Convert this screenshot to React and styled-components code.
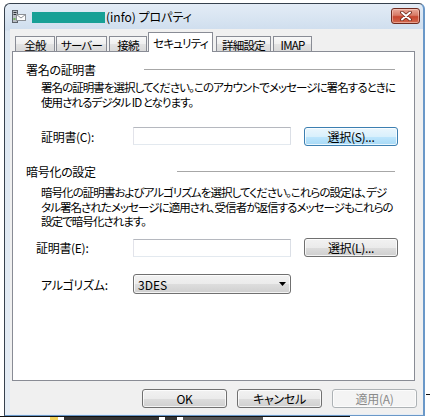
import React from 'react'
import styled, { createGlobalStyle } from 'styled-components'

const GlobalStyle = createGlobalStyle`
html, body {
  margin: 0;
  padding: 0;
  background: #fff;
}
body {
  font-family: "Noto Sans CJK JP", "Noto Sans", sans-serif;
  font-size: 12px;
  font-feature-settings: "palt";
  color: #000;
}
`

const Screen = styled.div`
  width: 430px;
  height: 420px;
  position: relative;
  overflow: hidden;
  background: #fff;
  box-sizing: border-box;
  padding: 3px 0 0 4px;
`

// what peeks out from behind the dialog
const BehindRow = styled.div`
  position: absolute;
  left: 0;
  top: 416px;
  width: 300px;
  height: 4px;
  border-top: 1px solid #111;
  display: flex;
  gap: 6px;
  padding-left: 50px;
`
const BehindBlock = styled.span`
  width: ${p => p.$w}px;
  height: 3px;
  background: ${p => p.$c};
`
const BehindTick = styled.div`
  position: absolute;
  left: 426px;
  top: 394px;
  width: 4px;
  height: 1px;
  background: #111;
`

const Window = styled.div`
  position: relative;
  width: 421px;
  height: 413px;
  box-sizing: border-box;
  border: 1px solid #36414e;
  border-right: 2px solid #6a98c8;
  border-bottom: 1px solid #6a98c8;
  border-radius: 6px 6px 0 0;
  background: linear-gradient(#e3ecf6, #cfdeee 26px, #dce7f2 27px, #e4ecf5);
  display: flex;
  flex-direction: column;
`

const TitleBar = styled.div`
  height: 25px;
  display: flex;
  align-items: center;
  padding-left: 7px;
  flex: none;
`
const Redacted = styled.span`
  width: 73px;
  height: 11px;
  margin-left: 5px;
  margin-top: 1px;
  background: #17a096;
`
const TitleText = styled.span`
  font-size: 12px;
  color: #000;
  margin-left: 1px;
`
const CloseButton = styled.div`
  margin-left: auto;
  margin-right: 3px;
  align-self: flex-start;
  margin-top: 4px;
  width: 29px;
  height: 16px;
  box-sizing: border-box;
  border: 1px solid #6e2a1f;
  border-radius: 3px;
  background: linear-gradient(#e9a99a, #d77a66 45%, #c7452f 55%, #d26a4f);
  box-shadow: inset 0 0 0 1px rgba(255, 220, 210, 0.5);
  display: flex;
  align-items: center;
  justify-content: center;
`

const Client = styled.div`
  flex: 1;
  margin: 0 0 1px 5px;
  background: #f0f0f0;
  display: flex;
  flex-direction: column;
  padding: 3px 0 0 2px;
`

const TabStrip = styled.div`
  display: flex;
  align-items: flex-end;
  padding-left: 3px;
  height: 20px;
  margin-bottom: -1px;
  position: relative;
  z-index: 2;
`
const Tab = styled.div`
  box-sizing: border-box;
  width: ${p => p.$w}px;
  margin-left: ${p => p.$ml}px;
  height: ${p => (p.$active ? 20 : 16)}px;
  border: 1px solid #898c95;
  border-bottom: ${p => (p.$active ? 'none' : '1px solid #898c95')};
  background: ${p =>
    p.$active ? '#fff' : 'linear-gradient(#f8f8f8, #efefef 50%, #e3e3e3 51%, #d9d9d9)'};
  display: flex;
  align-items: center;
  justify-content: center;
  padding-top: ${p => (p.$active ? 0 : 1)}px;
  font-size: 11.5px;
  letter-spacing: -0.8px;
  white-space: nowrap;
`

const Panel = styled.div`
  height: 330px;
  box-sizing: border-box;
  margin-right: 8px;
  border: 1px solid #898c95;
  background: #fff;
  display: flex;
  flex-direction: column;
`

const Heading = styled.div`
  display: flex;
  align-items: center;
  height: 16px;
  margin-top: ${p => p.$mt}px;
  padding-left: 13px;
  padding-right: 19px;
`
const HeadingText = styled.span`
  width: ${p => p.$w}px;
  flex: none;
  font-size: 12px;
  letter-spacing: -0.3px;
  white-space: nowrap;
`
const HeadingLine = styled.span`
  flex: 1;
  height: 1px;
  background: #a7a7a7;
`

const Para = styled.div`
  margin-top: ${p => p.$mt}px;
  padding-left: 28px;
  line-height: ${p => p.$lh}px;
  font-size: 11.5px;
  white-space: nowrap;
  letter-spacing: -0.95px;
`

const Row = styled.div`
  display: flex;
  align-items: center;
  height: ${p => p.$h || 19}px;
  margin-top: ${p => p.$mt}px;
  padding-left: ${p => p.$indent}px;
`
const Label = styled.span`
  width: ${p => p.$w}px;
  flex: none;
  font-size: 12px;
  letter-spacing: -0.3px;
  white-space: nowrap;
`
const TextBox = styled.div`
  width: 158px;
  height: 18px;
  box-sizing: border-box;
  border: 1px solid;
  border-color: #b5b8bf #dbdfe6 #e3e9ef #e2e3ea;
  background: #fff;
  align-self: ${p => p.$align || 'flex-start'};
`

const Button = styled.button`
  box-sizing: border-box;
  width: ${p => p.$w || 85}px;
  height: 19px;
  margin-left: ${p => p.$ml || 0}px;
  padding: 0;
  font-family: "Noto Sans CJK JP", "Noto Sans", sans-serif;
  font-size: 12px;
  font-feature-settings: "palt";
  letter-spacing: -0.3px;
  line-height: 17px;
  border-radius: 3px;
  border: 1px solid ${p =>
    p.$variant === 'focus' ? '#3c7fb1' : p.$variant === 'disabled' ? '#adb2b5' : '#707070'};
  color: ${p => (p.$variant === 'disabled' ? '#8a8a8a' : '#000')};
  background: ${p =>
    p.$variant === 'focus'
      ? 'linear-gradient(#eaf6fd, #d9f0fc 50%, #bee6fd 51%, #a7d9f5)'
      : p.$variant === 'disabled'
      ? '#f4f4f4'
      : 'linear-gradient(#f2f2f2, #ebebeb 50%, #dddddd 51%, #cfcfcf)'};
  box-shadow: inset 0 0 0 1px rgba(255, 255, 255, 0.75);
`

const Combo = styled.div`
  width: 158px;
  height: 20px;
  box-sizing: border-box;
  border: 1px solid #707070;
  border-radius: 3px;
  background: linear-gradient(#f2f2f2, #ebebeb 50%, #dddddd 51%, #cfcfcf);
  box-shadow: inset 0 0 0 1px rgba(255, 255, 255, 0.75);
  display: flex;
  align-items: center;
  justify-content: space-between;
  padding: 0 4px 0 4px;
  font-size: 12px;
`

const Footer = styled.div`
  display: flex;
  justify-content: flex-end;
  gap: 10px;
  padding: 8px 6px 0 0;
`

const tabs = [
  { label: '全般', w: 40, ml: 0 },
  { label: 'サーバー', w: 51, ml: 1 },
  { label: '接続', w: 38, ml: 2 },
  { label: 'セキュリティ', w: 65, ml: 1, active: true },
  { label: '詳細設定', w: 55, ml: 3 },
  { label: 'IMAP', w: 39, ml: 2 },
]

const AppIcon = () => (
  <svg width="15" height="15" viewBox="0 0 15 15">
    <rect x="0.5" y="1.5" width="5" height="12" fill="#b9bec4" stroke="#5b6169" />
    <rect x="1.5" y="3" width="3" height="1" fill="#2c3036" />
    <rect x="1.5" y="5" width="3" height="1" fill="#2c3036" />
    <rect x="1.5" y="9" width="2" height="2" fill="#6fae5a" />
    <rect x="4.5" y="5.5" width="9" height="6" fill="#fdfdfd" stroke="#8c9096" />
    <path d="M4.5 5.5 L9 9 L13.5 5.5" fill="none" stroke="#8c9096" />
  </svg>
)

const CloseGlyph = () => (
  <svg width="12" height="10" viewBox="0 0 12 10">
    <path d="M2 1.5 L10 8.5 M10 1.5 L2 8.5" stroke="#6b2418" strokeWidth="3.6" strokeLinecap="round" />
    <path d="M2 1.5 L10 8.5 M10 1.5 L2 8.5" stroke="#fff" strokeWidth="2" strokeLinecap="round" />
  </svg>
)

const Arrow = () => (
  <svg width="7" height="4" viewBox="0 0 7 4">
    <path d="M0 0 H7 L3.5 4 Z" fill="#000" />
  </svg>
)

export default function App() {
  return (
    <Screen>
      <GlobalStyle />
      <BehindRow>
        <BehindBlock $w={8} $c="#f2d25a" />
        <BehindBlock $w={95} $c="#333" />
        <BehindBlock $w={12} $c="#333" />
        <BehindBlock $w={80} $c="#555" />
      </BehindRow>
      <BehindTick />
      <Window>
        <TitleBar>
          <AppIcon />
          <Redacted />
          <TitleText>(info) プロパティ</TitleText>
          <CloseButton>
            <CloseGlyph />
          </CloseButton>
        </TitleBar>
        <Client>
          <TabStrip>
            {tabs.map(t => (
              <Tab key={t.label} $w={t.w} $ml={t.ml} $active={t.active}>
                {t.label}
              </Tab>
            ))}
          </TabStrip>
          <Panel>
            <Heading $mt={9}>
              <HeadingText $w={118}>署名の証明書</HeadingText>
              <HeadingLine />
            </Heading>
            <Para $mt={3} $lh={15}>
              署名の証明書を選択してください。このアカウントでメッセージに署名するときに
              <br />
              使用されるデジタル ID となります。
            </Para>
            <Row $mt={17} $indent={28}>
              <Label $w={92}>証明書(C):</Label>
              <TextBox />
              <Button $w={94} $ml={13} $variant="focus">選択(S)...</Button>
            </Row>
            <Heading $mt={17}>
              <HeadingText $w={151}>暗号化の設定</HeadingText>
              <HeadingLine />
            </Heading>
            <Para $mt={6} $lh={14.5}>
              暗号化の証明書およびアルゴリズムを選択してください。これらの設定は、デジ
              <br />
              タル署名されたメッセージに適用され、受信者が返信するメッセージもこれらの
              <br />
              設定で暗号化されます。
            </Para>
            <Row $mt={9.5} $indent={23}>
              <Label $w={97}>証明書(E):</Label>
              <TextBox $align="center" />
              <Button $w={94} $ml={13}>選択(L)...</Button>
            </Row>
            <Row $mt={17} $h={20} $indent={28}>
              <Label $w={92}>アルゴリズム:</Label>
              <Combo>
                <span>3DES</span>
                <Arrow />
              </Combo>
            </Row>
          </Panel>
          <Footer>
            <Button>OK</Button>
            <Button>キャンセル</Button>
            <Button $variant="disabled">適用(A)</Button>
          </Footer>
        </Client>
      </Window>
    </Screen>
  )
}
